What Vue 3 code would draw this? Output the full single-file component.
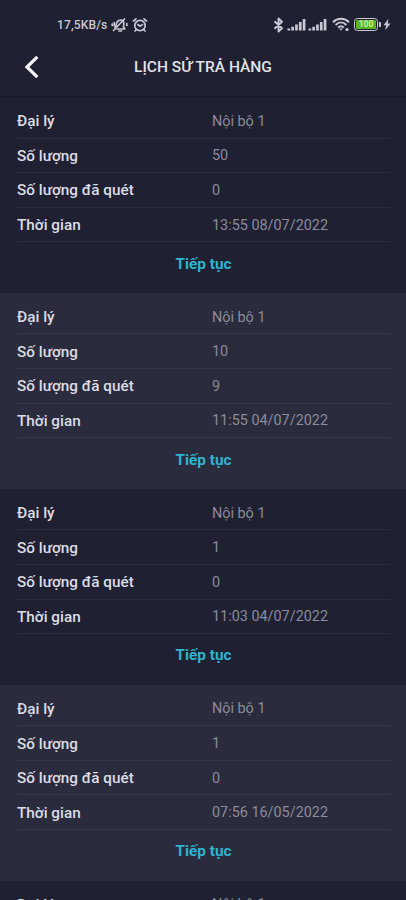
<script setup>
const records = [
  { agent: 'Nội bộ 1', quantity: '50', scanned: '0', time: '13:55 08/07/2022' },
  { agent: 'Nội bộ 1', quantity: '10', scanned: '9', time: '11:55 04/07/2022' },
  { agent: 'Nội bộ 1', quantity: '1', scanned: '0', time: '11:03 04/07/2022' },
  { agent: 'Nội bộ 1', quantity: '1', scanned: '0', time: '07:56 16/05/2022' },
  { agent: 'Nội bộ 1' },
]
const fields = [
  { key: 'agent', label: 'Đại lý' },
  { key: 'quantity', label: 'Số lượng' },
  { key: 'scanned', label: 'Số lượng đã quét' },
  { key: 'time', label: 'Thời gian' },
]
const fieldsOf = (record) => fields.filter((field) => field.key in record)
</script>

<template>
  <div class="screen">
    <div class="status">
      <div class="status-left">
        <span class="speed">17,5KB/s</span>
        <svg class="mute" width="17" height="16" viewBox="0 0 17 16" fill="none" stroke="currentColor" stroke-width="1.7" stroke-linecap="round" stroke-linejoin="round">
          <path d="M4 10.500 5 8.500C5.500 5 7 3 10 3.200c2 .2 3 1.800 2.800 4L12.500 10l1.300 2H6" />
          <path d="M8 14h2.500M2.500 13.500 13.500 2M1.200 7v1.500M15.800 6.500v2M3.200 5.500v3" />
        </svg>
        <svg class="alarm" width="16" height="16" viewBox="0 0 16 16" fill="none" stroke="currentColor" stroke-width="1.700" stroke-linecap="round">
          <circle cx="8" cy="8.500" r="5.200" />
          <path d="M1.500 4 4 1.800M14.500 4 12 1.800M5.800 7.500 8 9.200l2.500-1.600M4 13l-1 1M12 13l1 1" />
        </svg>
      </div>
      <div class="status-right">
        <svg width="11" height="16" viewBox="0 0 11 16" fill="none" stroke="currentColor" stroke-width="1.900" stroke-linejoin="round">
          <path d="M1.500 4.300 9 11.300 5.500 14.500v-13L9 4.700 1.500 11.700" />
        </svg>
        <svg v-for="n in 2" :key="n" class="signal" width="19" height="13" viewBox="0 0 19 13" fill="currentColor">
          <path d="M.5 10.500h2.700v2H.5zM4.300 8.700H7v3.800H4.300zM8.100 6.500h2.700v6H8.100zM11.900 4h2.700v8.500h-2.700zM15.700 1h2.700v11.500h-2.700z" />
        </svg>
        <svg class="wifi" width="18" height="15" viewBox="0 0 18 15" fill="none" stroke="currentColor" stroke-width="2">
          <path d="M1 5.200c4.500-4.600 11.500-4.600 16 0M3.600 8c3.200-3.200 7.600-3.200 10.800 0M6.100 10.600c1.700-1.600 4.100-1.600 5.800 0" />
          <path d="m7 11.600 2 2 2-2z" fill="currentColor" stroke="none" />
          <circle cx="15" cy="12.500" r="1.600" fill="currentColor" stroke="none" />
        </svg>
        <div class="battery"><span class="charge">100</span></div>
        <svg class="bolt" width="8" height="13" viewBox="0 0 8 13" fill="currentColor">
          <path d="M5.500.8.500 7.200h2.700l-1 5L7.500 5.500H4.600z" />
        </svg>
      </div>
    </div>
    <header class="header">
      <button class="back" aria-label="Quay lại">
        <svg width="16" height="24" viewBox="0 0 16 24" fill="none" stroke="currentColor" stroke-width="3.300">
          <path d="M13.300 1.800 3 12l10.300 10.200" />
        </svg>
      </button>
      <h1 class="title">LỊCH SỬ TRẢ HÀNG</h1>
    </header>
    <main class="list">
      <section v-for="(record, i) in records" :key="i" class="record">
        <div v-for="field in fieldsOf(record)" :key="field.key" class="row">
          <span class="label">{{ field.label }}</span>
          <span class="value">{{ record[field.key] }}</span>
        </div>
        <button v-if="record.time" class="continue">Tiếp tục</button>
      </section>
    </main>
  </div>
</template>

<style>
body {
  background: #1f2032;
}
</style>

<style scoped>
.screen {
  height: 900px;
  overflow: hidden;
  display: flex;
  flex-direction: column;
  background: #1f2032;
  color: #dcdce4;
  font-family: Roboto, "Noto Sans", sans-serif;
}
.status {
  flex: none;
  height: 48px;
  box-sizing: border-box;
  padding: 1px 15px 0 57px;
  display: flex;
  align-items: center;
  justify-content: space-between;
  color: #c9c9d4;
}
.status-left,
.status-right {
  display: flex;
  align-items: center;
}
.speed {
  font-size: 12px;
  font-weight: 500;
  letter-spacing: 0.15px;
}
.mute {
  margin-left: 4px;
}
.alarm {
  margin-left: 4px;
}
.signal {
  margin-left: 2.5px;
}
.wifi {
  margin-left: 5px;
}
.battery {
  position: relative;
  margin-left: 4px;
  width: 24px;
  height: 13px;
  box-sizing: border-box;
  padding: 1px;
  border: 1.5px solid #c9c9d4;
  border-radius: 3.5px;
  display: flex;
}
.battery::after {
  content: "";
  position: absolute;
  right: -4px;
  top: 3px;
  width: 2px;
  height: 5px;
  border-radius: 0 1px 1px 0;
  background: #c9c9d4;
}
.charge {
  flex: 1;
  border-radius: 1px;
  background: #52b626;
  color: #c8efaa;
  font-size: 8.5px;
  font-weight: 700;
  line-height: 9.5px;
  text-align: center;
}
.bolt {
  margin-left: 5px;
}
.header {
  flex: none;
  height: 49px;
  box-sizing: border-box;
  padding: 0 24px 10px;
  display: grid;
  grid-template-columns: 16px 1fr 16px;
  align-items: center;
  border-bottom: 1px solid #191a2a;
}
.back,
.continue {
  border: 0;
  padding: 0;
  background: none;
  font-family: inherit;
}
.back {
  display: flex;
  color: #f4f4f8;
}
.title {
  margin: 0;
  color: #e2e2e9;
  font-size: 15.5px;
  font-weight: 500;
  line-height: 20px;
  text-align: center;
}
.list {
  flex: 1;
  min-height: 0;
}
.record {
  height: 195.9px;
  box-sizing: border-box;
  padding: 7px 16px 0 17px;
  display: flex;
  flex-direction: column;
}
.record:nth-child(even) {
  background: #2a2b3c;
}
.row {
  flex: none;
  height: 34.6px;
  box-sizing: border-box;
  padding-top: 2px;
  display: grid;
  grid-template-columns: 195px 1fr;
  align-items: center;
  border-bottom: 1px solid #2a2b3d;
  font-size: 14.4px;
  line-height: 18px;
}
.record:nth-child(even) .row {
  border-bottom-color: #35364a;
}
.label {
  padding-bottom: 1px;
  font-size: 15.3px;
  font-weight: 500;
}
.value {
  color: #8b8b9b;
}
.continue {
  align-self: center;
  margin-top: 11.3px;
  color: #30b3d0;
  font-size: 15.3px;
  font-weight: 700;
  line-height: 20px;
}
</style>
